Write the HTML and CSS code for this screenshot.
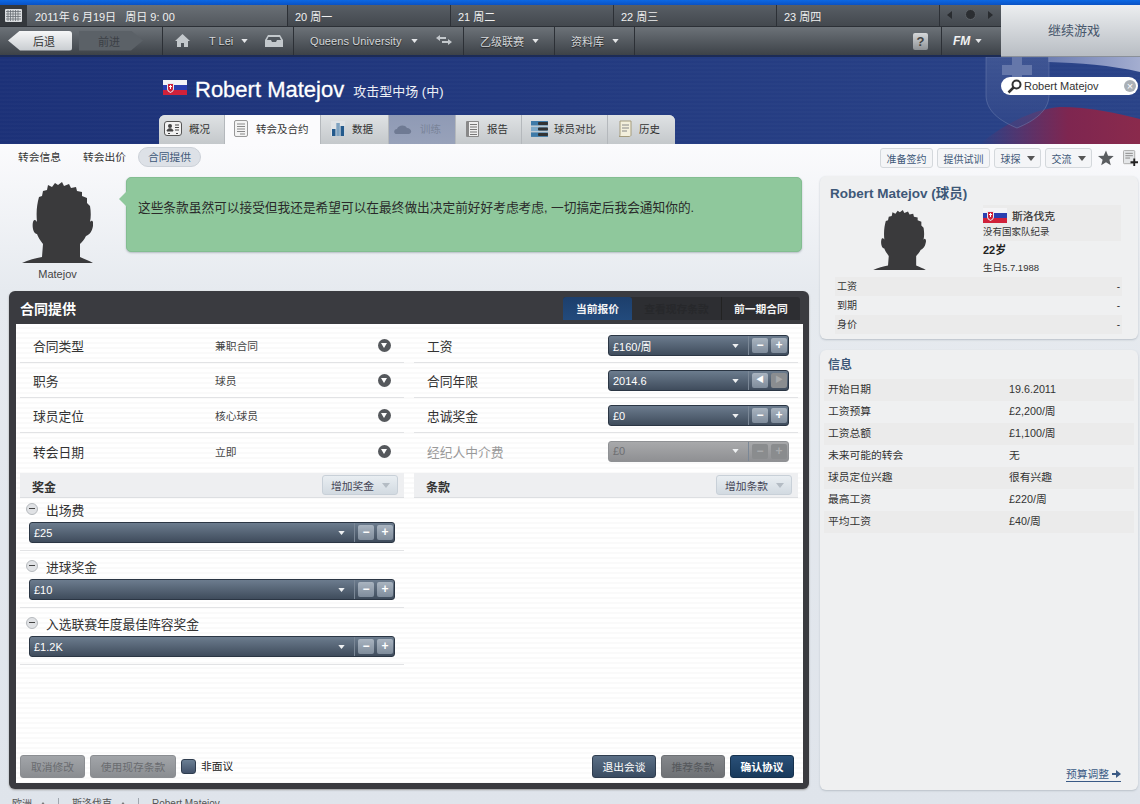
FILE: index.html
```html
<!DOCTYPE html>
<html lang="zh">
  <head>
    <meta charset="utf-8">
    <meta name="viewport" content="width=device-width">
    <title>Robert Matejov - 合同提供</title>
    <link rel="stylesheet" href="styles.css">
  </head>
  <body>
  <svg class="defs" xmlns="http://www.w3.org/2000/svg">
    <symbol id="head" viewBox="0 0 71 81">
      <path d="M0 81C6 78 14 76 20 75L21 62C18 58 16 55 15 52C11 52 10 44 11 40C12 37 14 38 15 40C14 30 15 22 17 15L20 14L21 9L25 8L26 3L30 5L33 1L36 3L40 0L42 4L47 2L49 6L54 5L55 9L60 10L60 14L65 16L65 21L68 24C69 30 69 35 68 40C70 37 72 40 71 44C70 50 67 53 64 54C62 58 60 60 58 62L58 75C62 77 68 79 71 81Z"/>
    </symbol>
    <symbol id="flag" viewBox="0 0 24 15">
      <rect width="24" height="5" fill="#f4f4f6"/>
      <rect y="5" width="24" height="5" fill="#2a3fb0"/>
      <rect y="10" width="24" height="5" fill="#d0213a"/>
      <path d="M4 3h7v6c0 2-2 3-3.500 4C6 12 4 11 4 9Z" fill="#e8e8ee"/>
      <path d="M5 4h5v5c0 1.500-1.500 2.200-2.500 3C6.500 11.200 5 10.500 5 9Z" fill="#d0213a"/>
      <path d="M7 5h1v1h1v1H8v2H7V7H6V6h1Z" fill="#fff"/>
    </symbol>
    <symbol id="caret" viewBox="0 0 8 5"><path d="M0 0h8L4 5Z"/></symbol>
  </svg>

  <div class="topStrip"></div>

  <div class="gameBar">
    <div class="barMain">
      <div class="barRow dateRow">
        <div class="calCell">
          <svg width="17" height="13" viewBox="0 0 17 13"><rect width="17" height="13" rx="1" fill="#d9dcdf"/><path d="M1 2.500h15M1 5h15M1 7.500h15M1 10h15M3 1v11M5.500 1v11M8 1v11M10.500 1v11M13 1v11" stroke="#6a6f75" stroke-width=".8"/></svg>
        </div>
        <div class="dateCell">2011年 6 月19日 &nbsp; 周日 9: 00</div>
        <div class="dayCell">20 周一</div>
        <div class="dayCell">21 周二</div>
        <div class="dayCell">22 周三</div>
        <div class="dayCell">23 周四</div>
        <div class="speedCell">
          <span class="speedArrow left"></span>
          <span class="speedDot"></span>
          <span class="speedArrow right"></span>
        </div>
      </div>
      <div class="barRow navRow">
        <div class="navCell backCell">
          <a class="backBtn">后退</a>
          <a class="fwdBtn">前进</a>
        </div>
        <div class="navCell userCell">
          <svg width="15" height="15" viewBox="0 0 15 15"><path d="M7.500 1L15 8h-2v6H9V10H6v4H2V8H0Z" fill="#c3c8cc"/></svg>
          <span class="navText tLei">T Lei</span>
          <svg class="navCaret" width="7" height="4"><use href="#caret"/></svg>
          <svg class="inbox" width="18" height="12" viewBox="0 0 18 12"><path d="M3 0h12l3 5v7H0V5Z" fill="#c3c8cc"/><path d="M3.500 2h11l1.500 3h-4l-1 2H7L6 5H2Z" fill="#50565c"/></svg>
        </div>
        <div class="navCell clubCell">
          <span class="navText clubName">Queens University</span>
          <svg class="navCaret" width="7" height="4"><use href="#caret"/></svg>
          <svg class="swap" width="16" height="11" viewBox="0 0 16 11"><path d="M0 3L4 0v2h6v2H4v2Z" fill="#c3c8cc"/><path d="M16 7l-4-3v2H6v2h6v2Z" fill="#c3c8cc"/></svg>
        </div>
        <div class="navCell leagueCell">
          <span class="navText">乙级联赛</span>
          <svg class="navCaret" width="7" height="4"><use href="#caret"/></svg>
        </div>
        <div class="navCell dbCell">
          <span class="navText">资料库</span>
          <svg class="navCaret" width="7" height="4"><use href="#caret"/></svg>
        </div>
        <div class="navFill"><span class="helpBtn">?</span></div>
        <div class="navCell fmCell">
          <span class="fmLogo">FM</span>
          <svg class="navCaret" width="7" height="4"><use href="#caret"/></svg>
        </div>
      </div>
    </div>
    <a class="continueBtn">继续游戏</a>
  </div>

  <header class="pageHead">
    <svg class="headFlag" width="190" height="87" viewBox="0 0 190 87" preserveAspectRatio="none">
      <defs>
        <linearGradient id="fadeW" x1="0" x2="1"><stop offset="0" stop-color="#8b98c4" stop-opacity=".7"/><stop offset="1" stop-color="#a4aed0"/></linearGradient>
        <linearGradient id="fadeR" x1="0" x2="1"><stop offset="0" stop-color="#8a2450" stop-opacity="0"/><stop offset=".55" stop-color="#7e2650"/><stop offset="1" stop-color="#8a2a4c"/></linearGradient>
        <linearGradient id="shieldFill" x1="0" x2="0" y1="0" y2="1"><stop offset="0" stop-color="#54689f" stop-opacity=".5"/><stop offset="1" stop-color="#34498a" stop-opacity=".5"/></linearGradient>
      </defs>
      <path d="M98 0H190V15C160 8 130 6 98 5Z" fill="url(#fadeW)"/>
      <path d="M30 87C55 66 85 52 110 50C140 50 165 56 190 62V87Z" fill="url(#fadeR)"/>
      <path d="M36 0H99V38C99 54 84 64 67 71C50 64 36 54 36 38Z" fill="url(#shieldFill)" stroke="#7e8fb8" stroke-opacity=".4"/>
      <path d="M62 0H72V8H82V18H72V30H62V18H52V8H62Z" fill="#6577aa"/>
    </svg>
    <div class="playerLine">
      <svg class="playerFlag" width="24" height="15"><use href="#flag"/></svg>
      <h1>Robert Matejov</h1>
      <span class="playerRole">攻击型中场 (中)</span>
    </div>
    <div class="searchBox">
      <svg width="15" height="15" viewBox="0 0 15 15"><circle cx="9.500" cy="5.500" r="4" fill="none" stroke="#333" stroke-width="2"/><path d="M6.500 8.500L1.500 13.500" stroke="#333" stroke-width="2.500"/></svg>
      <span class="searchText">Robert Matejov</span>
      <span class="searchClear">×</span>
    </div>
    <nav class="tabs">
      <a class="tab tabOverview">
        <svg width="18" height="15" viewBox="0 0 18 15"><rect x=".5" y=".5" width="17" height="14" rx="2.500" fill="#f2f2f2" stroke="#555"/><circle cx="6" cy="5" r="2" fill="#444"/><path d="M3 10c0-3 6-3 6 0ZM11 4h4M11 6.500h4M11 9h4M4 12.500h2M12 12.500h2" fill="#444" stroke="#444"/></svg>概况
      </a>
      <a class="tab tabActive tabTransfer">
        <svg width="14" height="17" viewBox="0 0 14 17"><rect x=".5" y=".5" width="13" height="16" rx="1.500" fill="#f4f4f4" stroke="#999"/><path d="M3 4h8M3 6.500h8M3 9h8M3 11.500h8M6 14h5" stroke="#888"/></svg>转会及合约
      </a>
      <a class="tab tabStats">
        <svg width="14" height="15" viewBox="0 0 14 15"><rect width="14" height="15" fill="#dfe3e6"/><rect x="1" y="8" width="3.500" height="7" fill="#245a8c"/><rect x="5.300" y="2" width="3.500" height="13" fill="#7ea2c0"/><rect x="9.600" y="5" width="3.500" height="10" fill="#245a8c"/></svg>数据
      </a>
      <a class="tab tabOff tabTraining">
        <svg width="18" height="10" viewBox="0 0 18 10"><path d="M2 10C-1 9 0 5 3 5C4 1 11 0 13 4C17 4 19 9 15 10Z" fill="#6f7a93"/></svg>训练
      </a>
      <a class="tab tabReport">
        <svg width="13" height="16" viewBox="0 0 13 16"><rect width="13" height="16" rx="1" fill="#888"/><rect x="3" y="1" width="9" height="14" fill="#eee"/><path d="M4 3.500h7M4 6h7M4 8.500h7M4 11h7M4 13.500h7" stroke="#777"/></svg>报告
      </a>
      <a class="tab tabCompare">
        <svg width="17" height="16" viewBox="0 0 17 16"><rect width="17" height="4.500" fill="#3e7aa8"/><rect y="5.700" width="17" height="4.500" fill="#7ea9c8"/><rect y="11.400" width="17" height="4.500" fill="#3e7aa8"/><rect x="7" y="1" width="10" height="3" rx="1" fill="#333"/><rect x="7" y="6.500" width="10" height="3" rx="1" fill="#333"/><rect x="7" y="12" width="10" height="3" rx="1" fill="#333"/></svg>球员对比
      </a>
      <a class="tab tabHistory">
        <svg width="14" height="17" viewBox="0 0 14 17"><path d="M2 1h11v14c0 1-1 1.500-2 1.500H1C2 16 2 15 2 14Z" fill="#f3efdc" stroke="#a49b7c"/><path d="M4 5h7M4 8h7M4 11h5" stroke="#888"/></svg>历史
      </a>
    </nav>
  </header>

  <div class="subBar">
    <div class="subTabs">
      <a class="subTab">转会信息</a>
      <a class="subTab">转会出价</a>
      <a class="subTab subTabActive">合同提供</a>
    </div>
    <div class="actions">
      <a class="actionBtn w53">准备签约</a>
      <a class="actionBtn w53">提供试训</a>
      <a class="actionBtn w47">球探<svg width="8" height="5"><use href="#caret"/></svg></a>
      <a class="actionBtn w47">交流<svg width="8" height="5"><use href="#caret"/></svg></a>
      <svg class="star" width="16" height="16" viewBox="0 0 17 16"><path d="M8.500 0l2.200 5.600 6 .4-4.600 3.800 1.500 5.900-5.100-3.200-5.100 3.200 1.500-5.900L0 6l6-.4Z" fill="#5a5d60"/></svg>
      <svg class="noteAdd" width="15" height="17" viewBox="0 0 16 18"><rect x=".5" y=".5" width="12" height="14" rx="1" fill="#e4e6e8" stroke="#aaa"/><path d="M2.500 3.500h8M2.500 6h8M2.500 8.500h5" stroke="#888"/><path d="M11 9h2v3h3v2h-3v3h-2v-3H8v-2h3Z" fill="#222"/></svg>
    </div>
  </div>

  <div class="content">
    <main class="leftCol">
      <div class="speechRow">
        <div class="portrait">
          <svg class="silhouette" width="71" height="81"><use href="#head"/></svg>
          <div class="portraitName">Matejov</div>
        </div>
        <div class="bubble">这些条款虽然可以接受但我还是希望可以在最终做出决定前好好考虑考虑, 一切搞定后我会通知你的.</div>
      </div>

      <section class="offerPanel">
        <div class="offerHead">
          <h2>合同提供</h2>
          <div class="offerTabs">
            <a class="offerTab offerTabActive">当前报价</a>
            <a class="offerTab offerTabDead">查看现存条款</a>
            <a class="offerTab offerTabLast">前一期合同</a>
          </div>
        </div>
        <div class="offerBody">
          <div class="offerCols">
            <div class="offerCol">
              <div class="termRow"><span class="termLabel">合同类型</span><span class="termValue">兼职合同</span><span class="roundDrop"></span></div>
              <div class="termRow"><span class="termLabel">职务</span><span class="termValue">球员</span><span class="roundDrop"></span></div>
              <div class="termRow"><span class="termLabel">球员定位</span><span class="termValue">核心球员</span><span class="roundDrop"></span></div>
              <div class="termRow noLine"><span class="termLabel">转会日期</span><span class="termValue">立即</span><span class="roundDrop"></span></div>
              <div class="sectionHead"><span>奖金</span><a class="addBtn">增加奖金<svg width="8" height="5"><use href="#caret"/></svg></a></div>
              <div class="bonus">
                <div class="bonusName"><span class="collapse"></span>出场费</div>
                <div class="stepper wide"><span class="stepValue">£25</span><svg class="stepCaret" width="7" height="4"><use href="#caret"/></svg><span class="stepBtn">−</span><span class="stepBtn">+</span></div>
              </div>
              <div class="bonus">
                <div class="bonusName"><span class="collapse"></span>进球奖金</div>
                <div class="stepper wide"><span class="stepValue">£10</span><svg class="stepCaret" width="7" height="4"><use href="#caret"/></svg><span class="stepBtn">−</span><span class="stepBtn">+</span></div>
              </div>
              <div class="bonus">
                <div class="bonusName"><span class="collapse"></span>入选联赛年度最佳阵容奖金</div>
                <div class="stepper wide"><span class="stepValue">£1.2K</span><svg class="stepCaret" width="7" height="4"><use href="#caret"/></svg><span class="stepBtn">−</span><span class="stepBtn">+</span></div>
              </div>
            </div>
            <div class="offerCol rightOfferCol">
              <div class="termRow"><span class="termLabel">工资</span><div class="stepper"><span class="stepValue">£160/周</span><svg class="stepCaret" width="7" height="4"><use href="#caret"/></svg><span class="stepBtn">−</span><span class="stepBtn">+</span></div></div>
              <div class="termRow"><span class="termLabel">合同年限</span><div class="stepper"><span class="stepValue">2014.6</span><svg class="stepCaret" width="7" height="4"><use href="#caret"/></svg><span class="stepBtn arrowBtn">◀</span><span class="stepBtn arrowBtn stepOff">▶</span></div></div>
              <div class="termRow"><span class="termLabel">忠诚奖金</span><div class="stepper"><span class="stepValue">£0</span><svg class="stepCaret" width="7" height="4"><use href="#caret"/></svg><span class="stepBtn">−</span><span class="stepBtn">+</span></div></div>
              <div class="termRow noLine termOff"><span class="termLabel">经纪人中介费</span><div class="stepper stepperOff"><span class="stepValue">£0</span><svg class="stepCaret" width="7" height="4"><use href="#caret"/></svg><span class="stepBtn">−</span><span class="stepBtn">+</span></div></div>
              <div class="sectionHead"><span>条款</span><a class="addBtn">增加条款<svg width="8" height="5"><use href="#caret"/></svg></a></div>
            </div>
          </div>
          <div class="offerFoot">
            <a class="footBtn btnGrey w65">取消修改</a>
            <a class="footBtn btnGrey w86">使用现存条款</a>
            <span class="checkBox"></span>
            <span class="checkLabel">非面议</span>
            <span class="footGap"></span>
            <a class="footBtn btnSlate w64">退出会谈</a>
            <a class="footBtn btnDim w64">推荐条款</a>
            <a class="footBtn btnNavy w64">确认协议</a>
          </div>
        </div>
      </section>
    </main>

    <aside class="rightCol">
      <section class="card playerCard">
        <h3>Robert Matejov (球员)</h3>
        <div class="cardTop">
          <svg class="cardHead" width="53" height="60"><use href="#head"/></svg>
          <div class="cardFacts">
            <div class="natBox">
              <div class="natLine"><svg width="24" height="15"><use href="#flag"/></svg><b>斯洛伐克</b></div>
              <div class="smallFact">没有国家队纪录</div>
            </div>
            <div class="ageFact">22岁</div>
            <div class="smallFact">生日5.7.1988</div>
          </div>
        </div>
        <div class="cardRow shaded"><span>工资</span><span>-</span></div>
        <div class="cardRow"><span>到期</span><span>-</span></div>
        <div class="cardRow shaded"><span>身价</span><span>-</span></div>
      </section>
      <section class="card infoCard">
        <h4>信息</h4>
        <div class="infoRow shaded"><span>开始日期</span><span>19.6.2011</span></div>
        <div class="infoRow"><span>工资预算</span><span>£2,200/周</span></div>
        <div class="infoRow shaded"><span>工资总额</span><span>£1,100/周</span></div>
        <div class="infoRow"><span>未来可能的转会</span><span>无</span></div>
        <div class="infoRow shaded"><span>球员定位兴趣</span><span>很有兴趣</span></div>
        <div class="infoRow"><span>最高工资</span><span>£220/周</span></div>
        <div class="infoRow shaded"><span>平均工资</span><span>£40/周</span></div>
        <a class="budgetLink">预算调整 <svg width="9" height="8" viewBox="0 0 9 8"><path d="M0 3h4V0l5 4-5 4V5H0Z" fill="#3a5a85"/></svg></a>
      </section>
    </aside>
  </div>

  <footer class="crumbs">
    <span class="crumb">欧洲<i></i></span>
    <span class="crumb">斯洛伐克<i></i></span>
    <span class="crumb">Robert Matejov</span>
  </footer>
  </body>
</html>
```

FILE: styles.css
```css
* {
  box-sizing: border-box;
}
html, body {
  margin: 0;
  height: 804px;
  overflow: hidden;
}
body {
  width: 1140px;
  font-family: "Liberation Sans", "Noto Sans CJK SC", sans-serif;
  font-size: 11px;
  color: #333;
  background: linear-gradient(#fbfbfd 144px, #e6eaef 290px, #dfe4eb);
}
h1, h2, h3, h4 {
  margin: 0;
}
.defs {
  display: none;
}

.topStrip {
  height: 5px;
  background: linear-gradient(#0c68e4, #0a52c4);
}

/* Top game bar */
.gameBar {
  display: flex;
  height: 52px;
}
.barMain {
  width: 1001px;
}
.barRow {
  display: flex;
}
.dateRow {
  height: 22px;
  background: linear-gradient(#585e65, #43484e);
  color: #f0f0f0;
  font-size: 11px;
  line-height: 24px;
  border-bottom: 1px solid #2c3036;
}
.calCell {
  width: 27px;
  display: flex;
  align-items: center;
  justify-content: center;
  background: #34383d;
}
.dateCell {
  width: 261px;
  padding-left: 8px;
  background: linear-gradient(#6a7076, #52575d);
  border-right: 1px solid #2c3036;
}
.dayCell {
  width: 163px;
  padding-left: 7px;
  border-right: 1px solid #2c3036;
}
.speedCell {
  flex: 1;
  display: flex;
  align-items: center;
  justify-content: space-between;
  padding: 0 8px 2px 7px;
}
.speedDot {
  width: 11px;
  height: 11px;
  border-radius: 50%;
  background: #2b2e32;
  border: 1px solid #5a5f65;
}
.speedArrow {
  width: 0;
  height: 0;
  border-top: 4px solid transparent;
  border-bottom: 4px solid transparent;
}
.speedArrow.left {
  border-right: 5px solid #292c30;
}
.speedArrow.right {
  border-left: 5px solid #292c30;
}
.navRow {
  height: 30px;
  background: linear-gradient(#6c7278, #3d4248);
  border-bottom: 2px solid #1c2b55;
  color: #d4d7da;
}
.navCell {
  display: flex;
  align-items: center;
  border-right: 1px solid #2c3036;
  padding-bottom: 1px;
}
.navText {
  text-shadow: 0 1px 1px #222;
}
.navCaret {
  fill: #e4e6e8;
  margin-left: 8px;
}
.backCell {
  width: 163px;
  padding-left: 8px;
  gap: 7px;
}
.backBtn, .fwdBtn {
  display: flex;
  align-items: center;
  justify-content: center;
  width: 64px;
  height: 20px;
  font-size: 11px;
}
.backBtn {
  background: linear-gradient(#f6f7f8, #c8ccd0);
  color: #333;
  clip-path: polygon(0 50%, 12px 0, 100% 0, 100% 100%, 12px 100%);
  padding-left: 8px;
  border-radius: 3px;
}
.fwdBtn {
  background: #5b6167;
  color: #3c4046;
  clip-path: polygon(0 0, 52px 0, 100% 50%, 52px 100%, 0 100%);
  padding-right: 4px;
}
.userCell {
  width: 131px;
  padding-left: 12px;
}
.tLei {
  margin-left: 19px;
}
.inbox {
  margin-left: 17px;
}
.clubCell {
  width: 170px;
  padding-left: 16px;
}
.clubName {
  letter-spacing: .1px;
}
.clubCell .navCaret {
  margin-left: 9px;
}
.swap {
  margin-left: 18px;
}
.leagueCell {
  width: 91px;
  padding-left: 16px;
}
.dbCell {
  width: 80px;
  padding-left: 16px;
}
.navFill {
  width: 307px;
  display: flex;
  align-items: center;
  justify-content: flex-end;
  border-right: 1px solid #2c3036;
  padding-right: 13px;
}
.helpBtn {
  width: 15px;
  height: 17px;
  border-radius: 2px;
  background: linear-gradient(#d6d8da, #8d9195);
  color: #444;
  font-weight: bold;
  font-size: 13px;
  line-height: 17px;
  text-align: center;
}
.fmCell {
  flex: 1;
  border: 0;
  padding-left: 11px;
}
.fmLogo {
  font-weight: bold;
  font-style: italic;
  font-size: 12px;
  color: #f2f2f2;
}
.fmCell .navCaret {
  margin-left: 5px;
}
.continueBtn {
  width: 139px;
  display: flex;
  align-items: center;
  justify-content: center;
  background: linear-gradient(#eceef0, #b8bdc3);
  border-bottom: 1px solid #8a9099;
  color: #47566b;
  font-size: 13px;
  padding: 0 0 2px 7px;
}

/* Blue page header */
.pageHead {
  position: relative;
  height: 87px;
  padding-top: 20px;
  background:
    repeating-linear-gradient(rgba(255, 255, 255, 0) 0, rgba(255, 255, 255, 0) 2px, rgba(255, 255, 255, .015) 2px, rgba(255, 255, 255, .015) 4px),
    linear-gradient(100deg, #1c3178, #2a4388);
  overflow: hidden;
}
.headFlag {
  position: absolute;
  right: 0;
  top: 0;
}
.playerLine {
  position: relative;
  display: flex;
  align-items: center;
  height: 26px;
  padding-left: 163px;
  color: #fff;
}
.playerFlag {
  margin-top: -6px;
}
.playerLine h1 {
  font-size: 22px;
  font-weight: normal;
  -webkit-text-stroke: .3px #fff;
  margin-left: 8px;
}
.playerRole {
  font-size: 13px;
  margin-left: 9px;
  color: #eef0f5;
}
.searchBox {
  position: absolute;
  left: 1001px;
  top: 20px;
  width: 137px;
  height: 18px;
  background: #fff;
  border-radius: 9px;
  display: flex;
  align-items: center;
  padding: 0 2px 0 6px;
  color: #333;
}
.searchText {
  flex: 1;
  margin-left: 2px;
  font-size: 11px;
}
.searchClear {
  width: 12px;
  height: 12px;
  border-radius: 50%;
  background: #aab0b6;
  color: #fff;
  font-size: 11px;
  line-height: 12px;
  text-align: center;
}
.tabs {
  position: absolute;
  left: 159px;
  bottom: 0;
  display: flex;
  height: 29px;
  width: 516px;
  background: #ccd0d3;
  border-radius: 6px 6px 0 0;
  overflow: hidden;
}
.tab {
  display: flex;
  align-items: center;
  gap: 7px;
  padding: 0 0 2px 5px;
  background: linear-gradient(#dfe2e4, #c4c8cb);
  border-right: 1px solid #b4b8bc;
  color: #333;
  font-size: 10.500px;
}
.tabOverview {
  width: 66px;
}
.tabTransfer {
  width: 96px;
  padding-left: 9px;
  gap: 8px;
}
.tabStats {
  width: 68px;
  padding-left: 10px;
}
.tabTraining {
  width: 67px;
  gap: 8px;
}
.tabReport {
  width: 66px;
  padding-left: 10px;
  gap: 8px;
}
.tabCompare {
  width: 86px;
  padding-left: 9px;
  gap: 6px;
}
.tabHistory {
  width: 67px;
  padding-left: 10px;
  border: 0;
}
.tabActive {
  background: #fbfbfd;
}
.tabOff {
  background: linear-gradient(#8f9ab5, #98a2ba);
  color: #7a8499;
}

/* Sub navigation */
.subBar {
  display: flex;
  justify-content: space-between;
  height: 28px;
}
.subTabs {
  display: flex;
  align-items: center;
  padding: 0 0 2px 18px;
  height: 27px;
  font-size: 10.750px;
}
.subTab {
  margin-right: 22px;
  color: #333;
}
.subTabActive {
  margin: 0 0 0 -10px;
  padding: 0 9px;
  height: 20px;
  border-radius: 10px;
  background: #dde1e7;
  border: 1px solid #ccd1d8;
  line-height: 18px;
  color: #3e5878;
}
.actions {
  display: flex;
  align-items: center;
  padding-right: 2px;
  height: 28px;
  gap: 4px;
}
.actionBtn {
  display: flex;
  align-items: center;
  justify-content: center;
  gap: 6px;
  height: 20px;
  background: #f4f5f7;
  border: 1px solid #d4d8dc;
  border-radius: 3px;
  font-size: 10px;
  color: #3e5878;
}
.actionBtn svg {
  fill: #555;
}
.w53 {
  width: 53px;
}
.w47 {
  width: 47px;
}
.star {
  margin-left: 2px;
}
.noteAdd {
  margin-left: 5px;
}

/* Page columns */
.content {
  display: flex;
  height: 623px;
}
.leftCol {
  width: 820px;
  padding-left: 9px;
}
.speechRow {
  display: flex;
  height: 119px;
  padding-top: 5px;
}
.portrait {
  width: 109px;
  padding-left: 13px;
  padding-top: 5px;
}
.silhouette, .cardHead {
  fill: #3a3a3c;
  display: block;
}
.portraitName {
  width: 71px;
  text-align: center;
  font-size: 11px;
  margin-top: 5px;
  color: #444;
}
.bubble {
  position: relative;
  margin-left: 8px;
  width: 676px;
  height: 75px;
  padding: 21px 11px 0;
  background: #8fc89c;
  border: 1px solid #83bd91;
  border-radius: 5px;
  box-shadow: 0 1px 2px #b4bcc2;
  font-size: 12.700px;
  line-height: 18px;
  color: #2a2a2a;
}
.bubble:before {
  content: "";
  position: absolute;
  left: -8px;
  top: 13px;
  width: 0;
  height: 0;
  border-top: 8px solid transparent;
  border-bottom: 8px solid transparent;
  border-right: 8px solid #8fc89c;
}

/* Contract offer panel */
.offerPanel {
  width: 800px;
  height: 498px;
  background: #3a3b40;
  border-radius: 6px;
  padding: 0 6px 6px 7px;
  display: flex;
  flex-direction: column;
  box-shadow: 0 1px 2px #999;
}
.offerHead {
  display: flex;
  justify-content: space-between;
  align-items: flex-start;
  height: 33px;
  padding-top: 6px;
}
.offerHead h2 {
  font-size: 14px;
  line-height: 25px;
  color: #fff;
  margin-left: 4px;
}
.offerTabs {
  display: flex;
  height: 23px;
  margin-right: 3px;
  background: #2d2e32;
  border-radius: 3px 3px 0 0;
}
.offerTab {
  font-size: 10.750px;
  font-weight: bold;
  line-height: 24px;
  text-align: center;
  color: #f4f4f4;
}
.offerTabActive {
  width: 69px;
  background: linear-gradient(#1d3f6c, #224a7c);
  border-radius: 3px 3px 0 0;
}
.offerTabDead {
  width: 90px;
  color: #27282b;
  border-right: 1px solid #222;
}
.offerTabLast {
  width: 78px;
}
.offerBody {
  flex: 1;
  display: flex;
  flex-direction: column;
  background: repeating-linear-gradient(#fff 0, #fff 3px, #fafafa 3px, #fafafa 5px);
}
.offerCols {
  flex: 1;
  display: flex;
  padding: 4px 0 0 4px;
  gap: 10px;
}
.offerCol {
  width: 384px;
}
.termRow {
  display: flex;
  align-items: center;
  height: 35px;
  border-bottom: 1px solid #e2e3e5;
  padding: 1px 4px 0 13px;
  font-size: 12.750px;
}
.termRow.noLine {
  border: 0;
}
.rightOfferCol .termRow {
  padding: 1px 9px 0 13px;
  justify-content: space-between;
}
.termLabel {
  width: 182px;
  color: #333;
}
.termValue {
  flex: 1;
  font-size: 10.750px;
  color: #444;
}
.roundDrop {
  position: relative;
  width: 13px;
  height: 13px;
  border-radius: 50%;
  background: #55585c;
  margin-right: 9px;
}
.roundDrop:after {
  content: "";
  position: absolute;
  left: 3px;
  top: 4px;
  width: 0;
  height: 0;
  border-left: 3.500px solid transparent;
  border-right: 3.500px solid transparent;
  border-top: 5px solid #fff;
}
.termOff .termLabel {
  color: #9a9a9a;
}
.stepper {
  display: flex;
  align-items: center;
  flex: none;
  width: 181px;
  height: 21px;
  border-radius: 3px;
  border: 1px solid #2b3644;
  background: linear-gradient(#6c7c8e, #3f4c5c);
  color: #fff;
  padding-right: 1px;
}
.stepper.wide {
  width: 366px;
  margin-left: 9px;
}
.stepValue {
  flex: 1;
  padding-left: 4px;
  font-size: 11px;
}
.stepCaret {
  fill: #eef0f2;
  margin-right: 5px;
}
.stepBtn {
  position: relative;
  width: 16px;
  height: 15px;
  margin-left: 3px;
  border-radius: 2px;
  background: linear-gradient(#a9b4c0, #7f8c9b);
  color: #fff;
  font-size: 12px;
  font-weight: bold;
  line-height: 14px;
  text-align: center;
}
.stepCaret + .stepBtn {
  margin-left: 8px;
}
.stepCaret + .stepBtn:before {
  content: "";
  position: absolute;
  left: -4px;
  top: -2px;
  width: 1px;
  height: 19px;
  background: #7a8796;
}
.arrowBtn {
  font-size: 8px;
}
.stepOff {
  background: #8a8d90;
  color: #a6a8aa;
}
.stepperOff {
  border-color: #8f9194;
  background: linear-gradient(#a8a9ab, #8f9093);
  color: #6e6f72;
}
.stepperOff .stepBtn {
  background: #8a8c8e;
  color: #a8aaac;
}
.sectionHead {
  display: flex;
  justify-content: space-between;
  align-items: center;
  height: 25px;
  margin-top: 5px;
  padding: 0 6px 0 12px;
  background: #eeeff1;
  border-bottom: 1px solid #dddfe2;
  font-size: 12px;
  font-weight: bold;
  color: #333;
}
.sectionHead > span {
  padding-top: 2px;
}
.addBtn {
  display: flex;
  align-items: center;
  justify-content: space-between;
  width: 76px;
  height: 20px;
  padding: 0 7px 0 8px;
  border: 1px solid #c8d0d8;
  border-radius: 3px;
  background: linear-gradient(#e9eef2, #d2dae1);
  font-weight: normal;
  font-size: 10.750px;
  color: #445;
}
.addBtn svg {
  fill: #b4bcc4;
}
.bonus {
  height: 53px;
  margin-bottom: 4px;
  border-bottom: 1px solid #e2e3e5;
}
.bonusName {
  display: flex;
  align-items: center;
  height: 24px;
  padding: 0 0 2px 6px;
  font-size: 12.750px;
  color: #333;
}
.collapse {
  position: relative;
  width: 12px;
  height: 12px;
  margin-right: 8px;
  border-radius: 50%;
  background: #e0e2e5;
  border: 1px solid #b6babe;
}
.collapse:after {
  content: "";
  position: absolute;
  left: 2px;
  top: 4px;
  width: 6px;
  height: 1px;
  background: #444;
}
.offerFoot {
  display: flex;
  align-items: flex-end;
  height: 28px;
  margin-bottom: 5px;
  padding: 0 9px 0 4px;
}
.footBtn {
  height: 23px;
  line-height: 22px;
  border-radius: 3px;
  text-align: center;
  font-size: 10.750px;
  margin-right: 5px;
}
.w65 {
  width: 65px;
}
.w86 {
  width: 86px;
}
.w64 {
  width: 64px;
}
.btnGrey {
  background: linear-gradient(#a2a5a9, #8a8d91);
  border: 1px solid #8b8e92;
  color: #6a6c70;
}
.btnSlate {
  background: linear-gradient(#5b6f86, #3a4c62);
  border: 1px solid #2f3d4f;
  color: #fff;
}
.btnDim {
  background: linear-gradient(#84878b, #6e7175);
  border: 1px solid #6e7175;
  color: #55585c;
}
.btnNavy {
  background: linear-gradient(#2a5078, #183a5c);
  border: 1px solid #16324e;
  color: #fff;
  margin-right: 0;
  font-weight: bold;
}
.checkBox {
  width: 15px;
  height: 15px;
  margin-bottom: 4px;
  border-radius: 3px;
  background: linear-gradient(#6b7f94, #42526a);
  border: 1px solid #2f3d4f;
}
.checkLabel {
  margin: 0 0 3px 5px;
  font-size: 10.750px;
  line-height: 18px;
  color: #222;
}
.footGap {
  flex: 1;
}

/* Right column */
.rightCol {
  width: 318px;
  padding-top: 4px;
  display: flex;
  flex-direction: column;
  gap: 11px;
}
.card {
  background: #eff0f1;
  border-radius: 6px;
  box-shadow: 0 1px 2px #b9c0c8;
}
.playerCard {
  height: 163px;
  padding: 10px 5px 0;
}
.playerCard h3 {
  font-size: 13.500px;
  line-height: 15px;
  padding-left: 5px;
  color: #3e5878;
}
.cardTop {
  display: flex;
  height: 76px;
  padding-top: 4px;
}
.cardHead {
  margin: 5px 0 0 48px;
}
.cardFacts {
  margin-left: 57px;
  width: 138px;
  font-size: 9.500px;
}
.natBox {
  height: 36px;
  background: #ebebeb;
}
.natLine {
  display: flex;
  align-items: center;
  gap: 5px;
  height: 18px;
  padding-top: 2px;
}
.natLine b {
  font-size: 10.750px;
  font-weight: normal;
  -webkit-text-stroke: .2px #333;
}
.smallFact {
  line-height: 18px;
  color: #333;
}
.ageFact {
  font-size: 11px;
  line-height: 18px;
  font-weight: bold;
  color: #222;
}
.cardRow {
  display: flex;
  justify-content: space-between;
  height: 19px;
  line-height: 19px;
  margin-left: 10px;
  width: 287px;
  padding: 0 2px;
  font-size: 10px;
}
.shaded {
  background: #ebebeb;
}
.infoCard {
  position: relative;
  height: 440px;
  padding: 8px 4px 0;
}
.infoCard h4 {
  font-size: 12px;
  line-height: 15px;
  height: 21px;
  padding-left: 4px;
  color: #3e5878;
}
.infoRow {
  display: flex;
  height: 22px;
  line-height: 21px;
  padding-left: 4px;
  font-size: 10.750px;
}
.infoRow span:first-child {
  width: 181px;
}
.budgetLink {
  position: absolute;
  right: 17px;
  bottom: 8px;
  font-size: 10.750px;
  color: #3a5a85;
  border-bottom: 1px solid #3a5a85;
}

/* Bottom breadcrumb */
.crumbs {
  display: flex;
  height: 9px;
  padding: 3px 0 0 12px;
  color: #555;
  font-size: 10px;
  line-height: 12px;
}
.crumb {
  display: flex;
  height: 14px;
  padding-right: 12px;
  margin-right: 13px;
  border-right: 1px solid #a0a6ae;
}
.crumb:last-child {
  border: 0;
}
.crumb i {
  margin: 4px 0 0 8px;
  width: 0;
  height: 0;
  border-left: 3px solid transparent;
  border-right: 3px solid transparent;
  border-bottom: 4px solid #777;
}
```
